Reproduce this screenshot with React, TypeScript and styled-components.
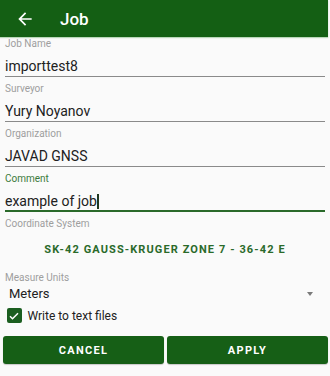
import React from "react";
import styled, { createGlobalStyle } from "styled-components";

const Global = createGlobalStyle`
  html, body { margin: 0; padding: 0; background: #fafafa; }
  body { font-family: Roboto, "Noto Sans", "Liberation Sans", sans-serif; }
  * { box-sizing: border-box; }
`;

const Page = styled.div`
  width: 330px;
  height: 376px;
  background: #fafafa;
  display: flex;
  flex-direction: column;
  overflow: hidden;
`;

const Header = styled.header`
  height: 37px;
  margin-right: 2px;
  background: #145f14;
  display: flex;
  align-items: center;
  color: #fff;
  box-shadow: 0 1px 1px rgba(120, 180, 120, 0.5);
`;

const BackButton = styled.div`
  width: 20px;
  height: 20px;
  margin-left: 15px;
  display: flex;
  align-items: center;
  justify-content: center;
`;

const Title = styled.h1`
  margin: 0 0 0 25px;
  font-size: 17px;
  font-weight: 500;
  line-height: 20px;
  color: #fff;
`;

const Form = styled.div`
  padding: 1px 5px 0;
  display: flex;
  flex-direction: column;
`;

const Field = styled.div`
  display: flex;
  flex-direction: column;
  & + & {
    margin-top: 6px;
  }
`;

const Label = styled.div<{ $active?: boolean }>`
  font-size: 10px;
  line-height: 12px;
  color: ${(p) => (p.$active ? "#3b7b3b" : "#9e9e9e")};
`;

const Value = styled.div<{ $active?: boolean }>`
  margin-top: 8px;
  font-size: 14px;
  line-height: 17px;
  color: #212121;
  padding-bottom: ${(p) => (p.$active ? "0" : "1px")};
  border-bottom: ${(p) => (p.$active ? "2px solid #2a6a2a" : "1px solid #8a8a8a")};
  display: flex;
  align-items: center;
`;

const Caret = styled.span`
  display: inline-block;
  width: 1.5px;
  height: 15px;
  background: #203820;
  margin-left: 0.5px;
`;

const SectionLabel = styled(Label)`
  margin-top: 6px;
`;

const CoordSystem = styled.div`
  margin-top: 13px;
  text-align: center;
  font-size: 11px;
  line-height: 14px;
  font-weight: 700;
  letter-spacing: 1.1px;
  color: #2a6a2a;
`;

const UnitsLabel = styled(Label)`
  margin-top: 15px;
`;

const Select = styled.div`
  margin-top: 2px;
  padding: 0 12px 0 4px;
  height: 16px;
  display: flex;
  align-items: center;
  justify-content: space-between;
  font-size: 13px;
  line-height: 16px;
  color: #212121;
`;

const Triangle = styled.span`
  width: 0;
  height: 0;
  border-left: 3.5px solid transparent;
  border-right: 3.5px solid transparent;
  border-top: 4px solid #7a7a7a;
`;

const CheckRow = styled.label`
  margin-top: 6px;
  padding-left: 2px;
  height: 15px;
  display: flex;
  align-items: center;
  font-size: 12px;
  color: #212121;
`;

const CheckBox = styled.span`
  width: 14.5px;
  height: 14.5px;
  border-radius: 2px;
  background: #1b5e20;
  display: flex;
  align-items: center;
  justify-content: center;
  margin-right: 6px;
`;

const Buttons = styled.div`
  margin-top: 13px;
  padding: 0 2px 0 3px;
  display: grid;
  grid-template-columns: 1fr 1fr;
  gap: 3px;
`;

const Button = styled.button`
  height: 28px;
  border: none;
  border-radius: 3px;
  background: #165f16;
  color: #fff;
  font-family: Roboto, "Noto Sans", sans-serif;
  font-size: 11px;
  font-weight: 700;
  letter-spacing: 1.3px;
  box-shadow: 0 1px 1px rgba(0, 0, 0, 0.2);
  padding: 0;
`;

export default function App() {
  return (
    <>
      <Global />
      <Page>
        <Header>
          <BackButton>
            <svg width="20" height="20" viewBox="0 0 24 24" fill="#fff">
              <path d="M20 11H7.83l5.59-5.59L12 4l-8 8 8 8 1.41-1.41L7.83 13H20v-2z" />
            </svg>
          </BackButton>
          <Title>Job</Title>
        </Header>
        <Form>
          <Field>
            <Label>Job Name</Label>
            <Value>importtest8</Value>
          </Field>
          <Field>
            <Label>Surveyor</Label>
            <Value>Yury Noyanov</Value>
          </Field>
          <Field>
            <Label>Organization</Label>
            <Value>JAVAD GNSS</Value>
          </Field>
          <Field>
            <Label $active>Comment</Label>
            <Value $active>
              example of job
              <Caret />
            </Value>
          </Field>
          <SectionLabel>Coordinate System</SectionLabel>
          <CoordSystem>SK-42 GAUSS-KRUGER ZONE 7 - 36-42 E</CoordSystem>
          <UnitsLabel>Measure Units</UnitsLabel>
          <Select>
            <span>Meters</span>
            <Triangle />
          </Select>
          <CheckRow>
            <CheckBox>
              <svg width="12" height="12" viewBox="0 0 24 24" fill="none" stroke="#fff" strokeWidth="3">
                <path d="M4 12.5l5 5L20 6.5" />
              </svg>
            </CheckBox>
            Write to text files
          </CheckRow>
        </Form>
        <Buttons>
          <Button>CANCEL</Button>
          <Button>APPLY</Button>
        </Buttons>
      </Page>
    </>
  );
}
